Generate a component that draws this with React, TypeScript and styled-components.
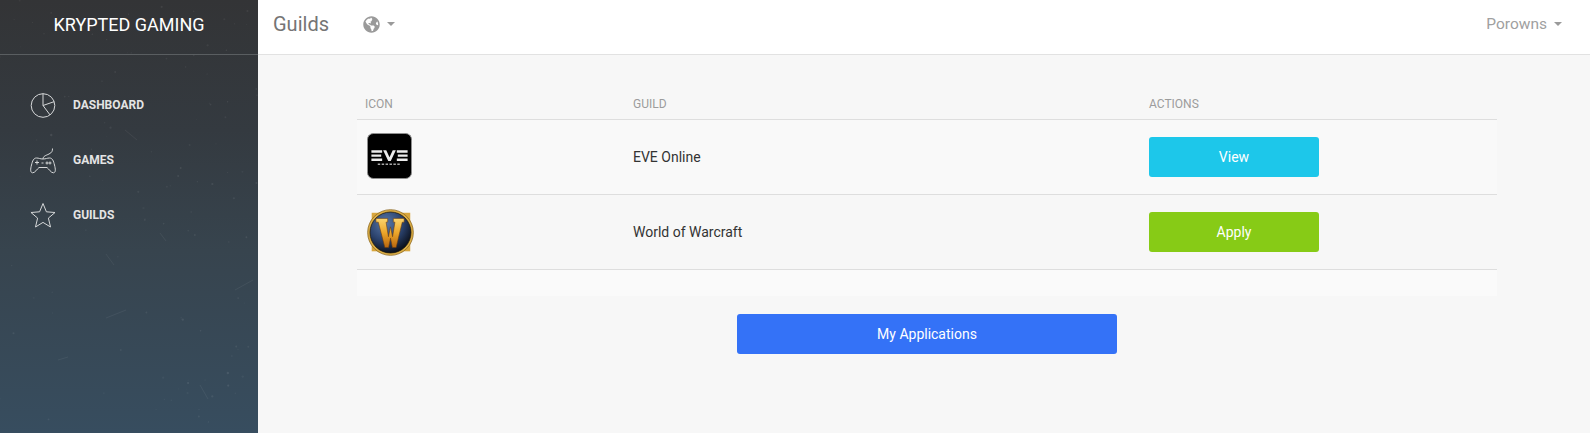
import styled, { createGlobalStyle } from "styled-components";
import { FaGlobeAmericas } from "react-icons/fa";

const GlobalStyle = createGlobalStyle`
  html, body {
    margin: 0;
    padding: 0;
    height: 100%;
    background: #f7f7f7;
    font-family: Roboto, "Liberation Sans", sans-serif;
  }
`;

const Page = styled.div`
  display: flex;
  width: 1590px;
  height: 433px;
  overflow: hidden;
`;

const Sidebar = styled.aside`
  position: relative;
  width: 258px;
  flex-shrink: 0;
  background: linear-gradient(180deg, #333436 0%, #343a40 30%, #37444e 58%, #374d5f 100%);
`;

const Texture = styled.svg`
  position: absolute;
  inset: 0;
  width: 100%;
  height: 100%;
  pointer-events: none;
`;

const Brand = styled.div`
  height: 55px;
  box-sizing: border-box;
  border-bottom: 1px solid #5a5e61;
  display: flex;
  align-items: center;
  justify-content: center;
  color: #fff;
  font-size: 18px;
  padding-bottom: 6px;
`;

const Nav = styled.nav`
  display: flex;
  flex-direction: column;
  gap: 19px;
  padding: 32px 0 0 30px;
`;

const NavItem = styled.a`
  display: flex;
  align-items: center;
  gap: 16px;
  height: 36px;
  color: #e4e4e4;
  font-size: 12px;
  font-weight: 700;
  svg {
    width: 27px;
    height: 27px;
    fill: none;
    stroke: #d6d8d9;
    stroke-width: 1;
    flex-shrink: 0;
  }
`;

const Main = styled.main`
  flex: 1;
  display: flex;
  flex-direction: column;
`;

const TopBar = styled.header`
  height: 55px;
  box-sizing: border-box;
  background: #fff;
  border-bottom: 1px solid #e2e2e2;
  display: flex;
  align-items: center;
  padding: 0 28px 6px 15px;
`;

const Title = styled.h1`
  margin: 0 34px 0 0;
  font-size: 20px;
  font-weight: 400;
  color: #757575;
`;

const Caret = styled.span`
  display: inline-block;
  width: 0;
  height: 0;
  border-left: 4px solid transparent;
  border-right: 4px solid transparent;
  border-top: 4px solid #9a9a9a;
`;

const GlobeMenu = styled.div`
  display: flex;
  align-items: center;
  gap: 7px;
  svg {
    width: 17px;
    height: 17px;
    display: block;
    color: #9a9a9a;
  }
`;

const UserMenu = styled.div`
  margin-left: auto;
  display: flex;
  align-items: center;
  gap: 7px;
  color: #a0a0a0;
  font-size: 15.5px;
`;

const Content = styled.section`
  display: flex;
  flex-direction: column;
  align-items: center;
  padding: 36px 0 0 6px;
`;

const Card = styled.div`
  width: 1140px;
  height: 205px;
  background: #fafafa;
`;

const Row = styled.div<{ $bg: string; $head?: boolean }>`
  display: grid;
  grid-template-columns: 276px 516px 1fr;
  align-items: center;
  box-sizing: border-box;
  height: ${(p) => (p.$head ? "29px" : "75px")};
  border-bottom: 1px solid #dedede;
  background: ${(p) => p.$bg};
  padding-bottom: ${(p) => (p.$head ? "2px" : "0")};
`;

const HeadCell = styled.div<{ $first?: boolean }>`
  font-size: 12px;
  color: #9c9c9c;
  padding-left: ${(p) => (p.$first ? "8px" : "0")};
`;

const IconCell = styled.div<{ $lift?: boolean }>`
  padding-left: 10px;
  display: flex;
  margin-bottom: ${(p) => (p.$lift ? "3px" : "0")};
  svg {
    display: block;
  }
`;

const GuildName = styled.div`
  font-size: 14px;
  color: #333;
`;

const ActionButton = styled.button<{ $color: string; $wide?: boolean }>`
  width: ${(p) => (p.$wide ? "380px" : "170px")};
  height: 40px;
  border: none;
  border-radius: 3px;
  background: ${(p) => p.$color};
  color: #fff;
  font-family: inherit;
  font-size: 14px;
  padding: 0;
`;

const Footer = styled.div`
  margin-top: 18px;
`;

// scattered specks, seeded so every load looks the same
let seed = 7;
const rand = () => {
  seed = (seed * 16807) % 2147483647;
  return seed / 2147483647;
};
const specks = Array.from({ length: 110 }, () => ({
  x: rand() * 258,
  y: rand() * 433,
  r: 0.5 + rand() * 0.7,
  o: 0.03 + rand() * 0.06,
}));
const scratches = [
  "M106 254l8 11",
  "M106 318l20-8",
  "M160 233l6 8",
  "M58 360l10-3",
  "M200 385l8 14",
  "M235 290l18-10",
  "M125 130l12 10",
];

const EveLogo = () => (
  <svg width="45" height="46" viewBox="0 0 46 47">
    <rect x="0.5" y="0.5" width="45" height="46" rx="6" fill="#000" stroke="#8f8f8f" />
    <g fill="#ececec">
      <path d="M4.500 17.500h11v2.700h-11zM4.500 22h10v2.200h-10zM4.500 26h11v2.700h-11z" />
      <path d="M16.500 17.500h3.200l3.300 7.300 3.300-7.300h3.200l-5.200 11.200h-2.600z" />
      <path d="M30.500 17.500h11v2.700h-11zM31.500 22h10v2.200h-10zM30.500 26h11v2.700h-11z" />
    </g>
    <path d="M11 32h24" stroke="#a8a8a8" strokeWidth="1.600" strokeDasharray="2.500 1.500" />
  </svg>
);

const WowLogo = () => (
  <svg width="47" height="47" viewBox="0 0 50 50">
    <defs>
      <radialGradient id="wowBlue" cx="38%" cy="28%" r="78%">
        <stop offset="0%" stopColor="#5a7aab" />
        <stop offset="55%" stopColor="#2a416b" />
        <stop offset="100%" stopColor="#06080e" />
      </radialGradient>
      <linearGradient id="wowGold" x1="0" y1="0" x2="0" y2="1">
        <stop offset="0%" stopColor="#fbd56e" />
        <stop offset="50%" stopColor="#eba52a" />
        <stop offset="100%" stopColor="#b8660f" />
      </linearGradient>
    </defs>
    <rect x="5" y="4" width="41" height="41" fill="#d8a63e" />
    <circle cx="25" cy="25" r="24.300" fill="#dcae45" stroke="#8a6620" strokeWidth="0.800" />
    <circle cx="25" cy="25" r="21.800" fill="url(#wowBlue)" stroke="#1a1408" strokeWidth="0.800" />
    <path
      d="M9.500 10H22V14H20.300L22.800 29.500L25 19L27.200 29.500L29.700 14H28V10H39.500V14H37.500L31 41H27L25 31L23 41H19L12 14H9.500Z"
      fill="url(#wowGold)"
      stroke="#6b3c0c"
      strokeWidth="0.600"
    />
  </svg>
);

export default function App() {
  return (
    <>
      <GlobalStyle />
      <Page>
        <Sidebar>
          <Texture viewBox="0 0 258 433">
            {specks.map((s, i) => (
              <circle key={i} cx={s.x} cy={s.y} r={s.r} fill="#fff" fillOpacity={s.o} />
            ))}
            {scratches.map((d) => (
              <path key={d} d={d} stroke="#fff" strokeOpacity={0.06} fill="none" />
            ))}
          </Texture>
          <Brand>KRYPTED GAMING</Brand>
          <Nav>
            <NavItem>
              <svg viewBox="0 0 27 27">
                <circle cx="13" cy="13.500" r="11.800" />
                <path d="M13 1.700v11.800l11-3.800M13 13.500l7 9.400" />
              </svg>
              DASHBOARD
            </NavItem>
            <NavItem>
              <svg viewBox="0 0 27 27">
                <path d="M6.500 11C3.500 11 2.500 14 1.500 18C.5 22 0 25.500 2.500 25.800C5 26 7 22 9 20.500H17C19 22 21 26 23.500 25.800C26 25.500 25.500 22 24.500 18C23.500 14 22.500 11 19.500 11C17 11 16 12 13 12C10 12 9 11 6.500 11Z" />
                <path d="M13 12C13 9 16 8.500 19 7C22 5.500 22.500 4 22.500 1.500" />
                <path d="M5 15.500h4M7 13.500v4M11.500 16h2" />
                <circle cx="17" cy="16" r="1" />
                <circle cx="20" cy="16" r="1" />
              </svg>
              GAMES
            </NavItem>
            <NavItem>
              <svg viewBox="0 0 27 27">
                <path d="M13 1.500l3.400 8.300 8.600.7-6.600 5.600 2.100 8.900-7.500-4.600-7.500 4.600 2.100-8.900-6.600-5.600 8.600-.7z" />
              </svg>
              GUILDS
            </NavItem>
          </Nav>
        </Sidebar>
        <Main>
          <TopBar>
            <Title>Guilds</Title>
            <GlobeMenu>
              <FaGlobeAmericas />
              <Caret />
            </GlobeMenu>
            <UserMenu>
              Porowns
              <Caret />
            </UserMenu>
          </TopBar>
          <Content>
            <Card>
              <Row $head $bg="#f7f7f7">
                <HeadCell $first>ICON</HeadCell>
                <HeadCell>GUILD</HeadCell>
                <HeadCell>ACTIONS</HeadCell>
              </Row>
              <Row $bg="#f9f9f9">
                <IconCell $lift>
                  <EveLogo />
                </IconCell>
                <GuildName>EVE Online</GuildName>
                <div>
                  <ActionButton $color="#1dc7ea">View</ActionButton>
                </div>
              </Row>
              <Row $bg="#f7f7f7">
                <IconCell>
                  <WowLogo />
                </IconCell>
                <GuildName>World of Warcraft</GuildName>
                <div>
                  <ActionButton $color="#87cb16">Apply</ActionButton>
                </div>
              </Row>
            </Card>
            <Footer>
              <ActionButton $color="#3472f7" $wide>
                My Applications
              </ActionButton>
            </Footer>
          </Content>
        </Main>
      </Page>
    </>
  );
}
